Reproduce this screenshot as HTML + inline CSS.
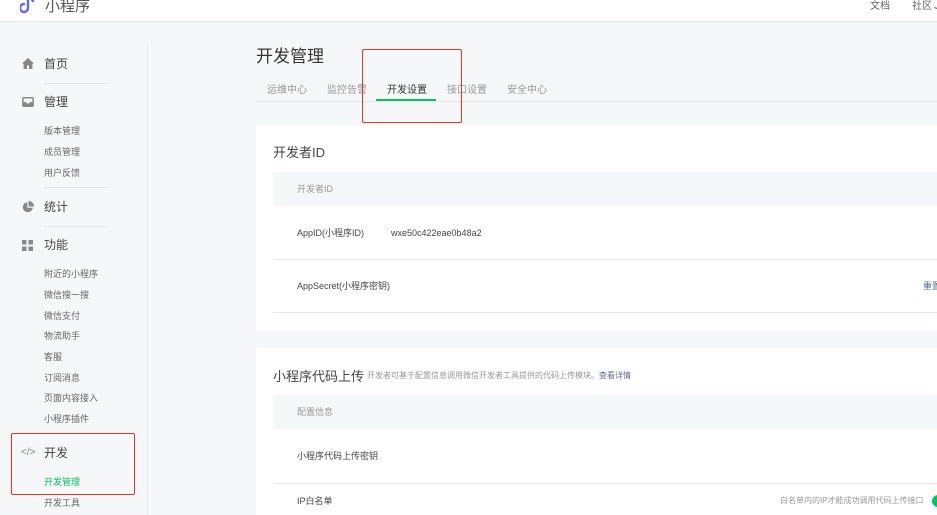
<!DOCTYPE html>
<html><head><meta charset="utf-8"><style>
*{margin:0;padding:0;box-sizing:border-box}
body{width:937px;height:515px;overflow:hidden;background:#f6f7f9;font-family:"Liberation Sans","Noto Sans CJK SC",sans-serif;color:#353535;position:relative}
.a{position:absolute;white-space:nowrap}
.hdr{left:0;top:0;width:937px;height:22px;background:#fff;border-bottom:1px solid #e3e4e8}
.nav{font-size:12px;color:#444;line-height:16px}
.sub{font-size:9px;color:#666;line-height:12px}
.ln{height:1px;background:#e7e8ec}
.card{background:#fff;left:256px;width:681px}
.gr{background:#f6f7f9}
.t9{font-size:9px;line-height:12px;color:#444}
</style></head><body>
<div class="a hdr"></div>
<svg class="a" style="left:20px;top:-6px" width="20" height="20" viewBox="0 0 20 20"><path d="M4 10a4 4 0 1 0 4 4V4q3 0 5 3" fill="none" stroke="#6467f0" stroke-width="2.4" stroke-linecap="round"/></svg>
<div class="a" style="left:45px;top:-5px;font-size:15px;color:#555">小程序</div>
<div class="a" style="left:870px;top:-3px;font-size:10px;color:#666">文档</div>
<div class="a" style="left:912px;top:-3px;font-size:10px;color:#666">社区⌄</div>

<div class="a" style="left:147px;top:45px;width:1px;height:470px;background:#e7e8ec"></div>

<svg class="a" style="left:22px;top:58px" width="12" height="11" viewBox="0 0 12 11"><path d="M6 0L0 5.5h1.6V11h3.4V7.5h2V11h3.4V5.5H12z" fill="#888"/></svg>
<div class="a nav" style="left:44px;top:56px">首页</div>
<div class="a ln" style="left:44px;top:83px;width:63px"></div>
<svg class="a" style="left:22px;top:97px" width="12" height="10" viewBox="0 0 12 10"><rect x="0.8" y="0.8" width="10.4" height="8.4" rx="1" fill="none" stroke="#888" stroke-width="1.5"/><path d="M1 5h3l1 1.5h2L8 5h3v4H1z" fill="#888"/></svg>
<div class="a nav" style="left:44px;top:94px">管理</div>
<div class="a sub" style="left:44px;top:125px">版本管理</div>
<div class="a sub" style="left:44px;top:146px">成员管理</div>
<div class="a sub" style="left:44px;top:167px">用户反馈</div>
<div class="a ln" style="left:44px;top:187px;width:63px"></div>
<svg class="a" style="left:22px;top:201px" width="12" height="12" viewBox="0 0 12 12"><path d="M5.3 1.2A5 5 0 1 0 10.8 6.7H5.3z" fill="#888"/><path d="M6.5 0A5.5 5.5 0 0 1 12 5.5H6.5z" fill="#888"/></svg>
<div class="a nav" style="left:44px;top:199px">统计</div>
<div class="a ln" style="left:44px;top:226px;width:63px"></div>
<svg class="a" style="left:22px;top:240px" width="11" height="11" viewBox="0 0 11 11"><rect width="4.5" height="4.5" fill="#888"/><rect x="6.5" width="4.5" height="4.5" fill="#888"/><rect y="6.5" width="4.5" height="4.5" fill="#888"/><rect x="6.5" y="6.5" width="4.5" height="4.5" fill="#888"/></svg>
<div class="a nav" style="left:44px;top:237px">功能</div>
<div class="a sub" style="left:44px;top:268px">附近的小程序</div>
<div class="a sub" style="left:44px;top:289px">微信搜一搜</div>
<div class="a sub" style="left:44px;top:310px">微信支付</div>
<div class="a sub" style="left:44px;top:330px">物流助手</div>
<div class="a sub" style="left:44px;top:351px">客服</div>
<div class="a sub" style="left:44px;top:372px">订阅消息</div>
<div class="a sub" style="left:44px;top:392px">页面内容接入</div>
<div class="a sub" style="left:44px;top:413px">小程序插件</div>
<div class="a" style="left:21px;top:447px;font-size:10px;color:#888">&lt;/&gt;</div>
<div class="a nav" style="left:44px;top:445px">开发</div>
<div class="a sub" style="left:44px;top:476px;color:#07c160">开发管理</div>
<div class="a sub" style="left:44px;top:497px">开发工具</div>
<div class="a" style="left:11px;top:433px;width:124px;height:62px;border:1.5px solid #f0312b;border-radius:2px"></div>

<div class="a" style="left:256px;top:42px;font-size:17px;color:#353535">开发管理</div>
<div class="a" style="left:256px;top:101px;width:681px;height:1px;background:#e7e8ec"></div>
<div class="a" style="left:267px;top:81px;font-size:10px;color:#999">运维中心</div>
<div class="a" style="left:327px;top:81px;font-size:10px;color:#999">监控告警</div>
<div class="a" style="left:387px;top:81px;font-size:10px;color:#353535">开发设置</div>
<div class="a" style="left:447px;top:81px;font-size:10px;color:#999">接口设置</div>
<div class="a" style="left:507px;top:81px;font-size:10px;color:#999">安全中心</div>
<div class="a" style="left:376px;top:99px;width:60px;height:2px;background:#07c160"></div>
<div class="a" style="left:362px;top:49px;width:100px;height:74px;border:1.5px solid #f0312b;border-radius:2px"></div>

<div class="a card" style="top:125px;height:206px"></div>
<div class="a" style="left:273px;top:142px;font-size:13px;color:#444">开发者ID</div>
<div class="a gr" style="left:273px;top:172px;width:664px;height:34px"></div>
<div class="a t9" style="left:297px;top:183px;color:#999">开发者ID</div>
<div class="a t9" style="left:297px;top:227px">AppID(小程序ID)</div>
<div class="a t9" style="left:391px;top:227px">wxe50c422eae0b48a2</div>
<div class="a ln" style="left:273px;top:259px;width:664px"></div>
<div class="a t9" style="left:297px;top:280px">AppSecret(小程序密钥)</div>
<div class="a t9" style="left:923px;top:280px;color:#576b95">重置</div>
<div class="a ln" style="left:273px;top:312px;width:664px"></div>

<div class="a card" style="top:348px;height:167px"></div>
<div class="a" style="left:273px;top:366px;font-size:13px;color:#444">小程序代码上传</div>
<div class="a" style="left:367px;top:370px;font-size:8px;color:#999">开发者可基于配置信息调用微信开发者工具提供的代码上传模块。<span style="color:#576b95">查看详情</span></div>
<div class="a gr" style="left:273px;top:395px;width:664px;height:34px"></div>
<div class="a t9" style="left:297px;top:406px;color:#999">配置信息</div>
<div class="a t9" style="left:297px;top:450px">小程序代码上传密钥</div>
<div class="a ln" style="left:273px;top:483px;width:664px"></div>
<div class="a t9" style="left:297px;top:495px">IP白名单</div>
<div class="a" style="left:780px;top:495px;font-size:8px;color:#999">白名单内的IP才能成功调用代码上传接口</div>
<div class="a" style="left:932px;top:495px;width:14px;height:12px;border-radius:6px;background:#07c160"></div>
</body></html>
